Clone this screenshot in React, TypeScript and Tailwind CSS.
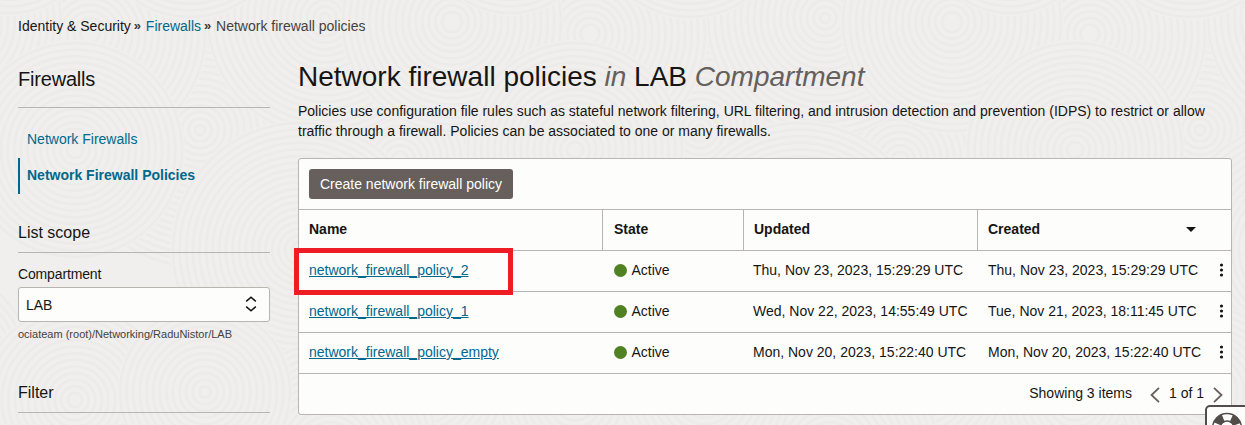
import { Fragment } from "react";

const policies = [
  { name: "network_firewall_policy_2", updated: "Thu, Nov 23, 2023, 15:29:29 UTC", created: "Thu, Nov 23, 2023, 15:29:29 UTC", highlighted: true },
  { name: "network_firewall_policy_1", updated: "Wed, Nov 22, 2023, 14:55:49 UTC", created: "Tue, Nov 21, 2023, 18:11:45 UTC", highlighted: false },
  { name: "network_firewall_policy_empty", updated: "Mon, Nov 20, 2023, 15:22:40 UTC", created: "Mon, Nov 20, 2023, 15:22:40 UTC", highlighted: false },
];

// Ring centres and outer radius of one 500px wide tile.
const swirls: [number, number, number][] = [
  [200, 130, 140], [400, 160, 130], [325, 18, 120], [90, 34, 118], [590, 34, 118], [-48, 22, 112],
  [452, 22, 112], [10, -72, 88], [510, -72, 88], [190, -80, 100], [300, 250, 130], [75, 150, 110],
  [575, 150, 110], [420, 380, 120], [-80, 380, 120], [330, 450, 110], [75, 400, 96], [205, 392, 88],
];

function Texture() {
  return (
    <svg className="pointer-events-none absolute inset-0" width="1245" height="425" aria-hidden="true">
      <defs>
        <pattern id="swirls" width="500" height="480" patternUnits="userSpaceOnUse">
          {swirls.map(([cx, cy, radius], i) => (
            <g key={i} stroke="#ecebe9" strokeWidth="2.4" fill="none">
              <circle cx={cx} cy={cy} r={radius} fill="#f0efed" stroke="none" />
              {Array.from({ length: Math.floor(radius / 6.6) }, (_, n) => (
                <circle key={n} cx={cx} cy={cy} r={radius - 3 - n * 6.6} />
              ))}
            </g>
          ))}
        </pattern>
      </defs>
      <rect width="1245" height="425" fill="url(#swirls)" />
    </svg>
  );
}

function Breadcrumb() {
  return (
    <nav className="flex h-[52px] items-center pl-[18px] text-sm leading-5">
      <span>Identity &amp; Security</span>
      <span className="ml-[3px] w-[12px] text-[13px] font-bold text-[#3a3735]">»</span>
      <a className="text-[#00688c]">Firewalls</a>
      <span className="ml-[3px] w-[12px] text-[13px] font-bold text-[#3a3735]">»</span>
      <span className="text-[#45413f]">Network firewall policies</span>
    </nav>
  );
}

function Sidebar() {
  return (
    <aside className="flex w-[252px] flex-col">
      <h2 className="flex h-14 items-center border-b border-[#b8b4b0] pb-[2px] text-xl tracking-[-0.2px]">Firewalls</h2>
      <div className="mt-[14px] flex h-9 items-center pb-[2px] pl-[9px] text-sm text-[#00688c]">Network Firewalls</div>
      <div className="flex h-9 items-center border-l-2 border-[#00688c] pb-[2px] pl-[7px] text-sm font-bold text-[#00688c]">Network Firewall Policies</div>
      <h3 className="mt-5 flex h-[39px] items-center border-b border-[#b8b4b0] text-base">List scope</h3>
      <label className="mt-[11px] text-sm leading-5 tracking-[-0.15px]">Compartment</label>
      <div className="mt-[3px] flex h-[35px] items-center justify-between rounded-[3px] border border-[#b8b4b0] bg-[#fdfdfc] pr-[12px] pl-[7px] text-sm">
        <span>LAB</span>
        <svg className="-mt-[2px]" width="12" height="16" viewBox="0 0 12 16" fill="none" stroke="#161513" strokeWidth="1.6">
          <path d="M1.2 5.4 6 1.2 10.8 5.4M1.2 10.6 6 14.8 10.8 10.6" />
        </svg>
      </div>
      <div className="mt-[3px] text-[11px] leading-[18px] text-[#45413f]">ociateam (root)/Networking/RaduNistor/LAB</div>
      <h3 className="mt-[30px] flex h-[40px] items-center border-b border-[#b8b4b0] text-base">Filter</h3>
    </aside>
  );
}

function PolicyTable() {
  return (
    <section className="mt-[17px] h-[257px] rounded-[3px] border border-[#b8b4b0] bg-[#fdfdfc] text-sm">
      <div className="flex h-[50px] items-center pl-[10px]">
        <button className="h-[30px] w-[204px] rounded-[3px] bg-[#665f5b] whitespace-nowrap text-white">Create network firewall policy</button>
      </div>
      <div className="grid auto-rows-[41px] grid-cols-[303px_141px_234px_254px]">
        <div className="flex items-center border-t border-[#b8b4b0] pb-[2px] pl-[10px] font-bold">Name</div>
        <div className="flex items-center border-t border-l border-[#b8b4b0] pb-[2px] pl-[11px] font-bold">State</div>
        <div className="flex items-center border-t border-l border-[#b8b4b0] pb-[2px] pl-[10px] font-bold">Updated</div>
        <div className="flex items-center justify-between border-t border-l border-[#b8b4b0] pr-[35px] pb-[2px] pl-[10px] font-bold">
          Created
          <svg width="10" height="5" viewBox="0 0 10 5"><path d="M0 0h10L5 5Z" fill="#161513" /></svg>
        </div>
        {policies.map((p) => (
          <Fragment key={p.name}>
            <div className="relative flex items-center border-t border-[#b8b4b0] pb-[2px] pl-[10px]">
              <a className="text-[#00688c] underline">{p.name}</a>
              {p.highlighted && <div className="absolute -top-[3px] -left-[5px] z-10 h-[47px] w-[219px] border-[5px] border-[#ee1c25]" />}
            </div>
            <div className="flex items-center border-t border-[#b8b4b0] pb-[2px] pl-[11.5px]">
              <span className="mr-[5px] size-[13px] rounded-full bg-[#508223]" />
              Active
            </div>
            <div className="flex items-center border-t border-[#b8b4b0] pb-[2px] pl-[10px] whitespace-nowrap">{p.updated}</div>
            <div className="flex items-center justify-between border-t border-[#b8b4b0] pr-[7px] pb-[2px] pl-[11px] whitespace-nowrap">
              {p.created}
              <svg width="5" height="14" viewBox="0 0 5 14" fill="#161513">
                <circle cx="2.5" cy="2" r="1.6" /><circle cx="2.5" cy="7" r="1.6" /><circle cx="2.5" cy="12" r="1.6" />
              </svg>
            </div>
          </Fragment>
        ))}
      </div>
      <footer className="flex h-[41px] items-center justify-end border-t border-[#b8b4b0] pr-[8px] pb-[2px]">
        <span>Showing 3 items</span>
        <svg className="mt-[3px] ml-[18px]" width="10" height="16" viewBox="0 0 10 16" fill="none" stroke="#665f5b" strokeWidth="1.8"><path d="M9 .8 1.5 8 9 15.2" /></svg>
        <span className="ml-[9px]">1 of 1</span>
        <svg className="mt-[3px] ml-[9px]" width="10" height="16" viewBox="0 0 10 16" fill="none" stroke="#665f5b" strokeWidth="1.8"><path d="M1 .8 8.5 8 1 15.2" /></svg>
      </footer>
    </section>
  );
}

function HelpButton() {
  return (
    <button className="absolute top-[405px] left-[1205px] h-[44px] w-[48px] rounded-[5px] border-2 border-[#524d4a] bg-[#fdfdfc]">
      <svg className="absolute top-[5px] left-[4px]" width="32" height="32" viewBox="0 0 32 32" fill="none">
        <circle cx="16" cy="16" r="10.5" stroke="#524d4a" strokeWidth="8" strokeDasharray="8.25 8.243" strokeDashoffset="-4.12" />
        <circle cx="16" cy="16" r="14.5" stroke="#524d4a" strokeWidth="1.5" />
        <circle cx="16" cy="16" r="7" stroke="#524d4a" strokeWidth="1.5" />
      </svg>
    </button>
  );
}

export default function App() {
  return (
    <div className="relative h-[425px] w-[1245px] overflow-hidden bg-[#f0efed] font-['Liberation_Sans',Arial,sans-serif] text-[#161513]">
      <Texture />
      <div className="relative">
        <Breadcrumb />
        <div className="flex gap-7 pl-[18px]">
          <Sidebar />
          <main className="w-[934px]">
            <h1 className="h-[49px] text-[28px] leading-[49px] whitespace-nowrap">
              Network firewall policies <em className="text-[#665f5b]">in</em> LAB <em className="text-[#665f5b]">Compartment</em>
            </h1>
            <p className="text-sm leading-5 whitespace-nowrap">
              Policies use configuration file rules such as stateful network filtering, URL filtering, and intrusion detection and prevention (IDPS) to restrict or allow
              <br />
              traffic through a firewall. Policies can be associated to one or many firewalls.
            </p>
            <PolicyTable />
          </main>
        </div>
      </div>
      <HelpButton />
    </div>
  );
}
